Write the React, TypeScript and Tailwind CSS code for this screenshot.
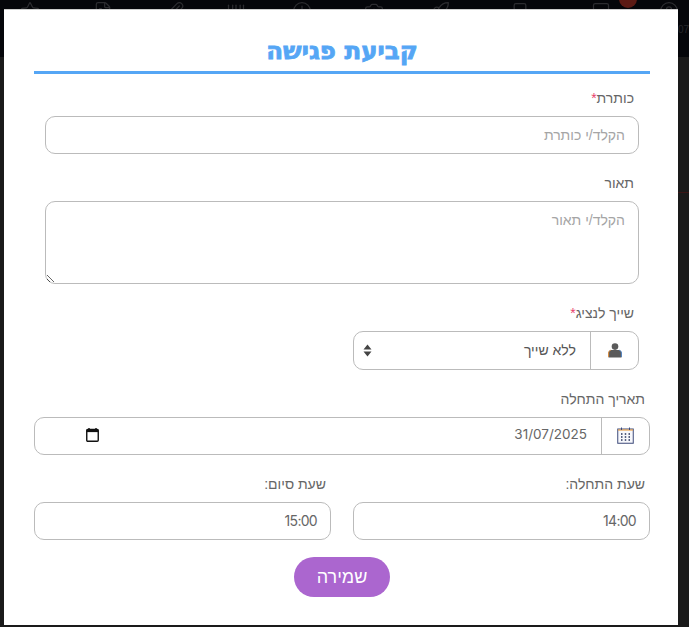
import React from "react";
import { Star, FileText, Paperclip, Barcode, Clock, Camera, Rocket, Bookmark, SquareCheck, CircleUser } from "lucide-react";

const labelCls = "block text-[14px] leading-[20px] text-[#666666] font-['Liberation_Sans',sans-serif]";
const fieldCls = "bg-white border border-[#bbbbbb] rounded-[10px] text-[14px] text-[#555555] outline-none";
const numCls = "font-['Inter',sans-serif] text-[13.5px] text-[#666666]";

function Req() {
  return <span className="text-[#e83e6c]">*</span>;
}

const bgIcons = [
  { I: Star, cls: "ml-[20px]" },
  { I: FileText, cls: "ml-[53px]" },
  { I: Paperclip, cls: "ml-[53px]" },
  { I: Barcode, cls: "ml-[40px]" },
  { I: Clock, cls: "ml-[46px]" },
  { I: Camera, cls: "ml-[52px]" },
  { I: Rocket, cls: "ml-[46px]" },
  { I: Bookmark, cls: "ml-[60px]" },
  { I: SquareCheck, cls: "ml-[61px]" },
  { I: CircleUser, cls: "ml-[48px]" },
];

export default function App() {
  return (
    <div dir="rtl" className="relative w-[689px] h-[627px] overflow-hidden bg-[#1a1a1a] font-['Liberation_Sans',sans-serif]">
      <div dir="ltr" className="absolute left-0 top-0 w-full h-[57px] bg-[#05060a]">
        <div className="flex pt-[1px]">
          {bgIcons.map(({ I, cls }, i) => (
            <I key={i} size={20} strokeWidth={1.5} className={`${cls} shrink-0 text-[#2c2c30]`} />
          ))}
        </div>
        <div className="absolute left-[619px] -top-[10px] w-[18px] h-[18px] rounded-full bg-[#5c1a14]" />
        <span className="absolute left-[678px] top-[24px] text-[10px] leading-[12px] text-[#26262a]">07</span>
      </div>
      <div className="absolute left-[678px] top-[192px] w-[11px] h-px bg-[#3a1515]" />

      <div className="absolute left-[4px] top-[9px] w-[674px] h-[616px] bg-white border-t border-[#cccccc] pl-[30px] pr-[28px]">
        <h1 className="h-[64px] pt-[23px] border-b-[3px] border-[#55a6f5] text-center text-[24.5px] leading-[36px] font-bold text-[#55a6f5] [-webkit-text-stroke:0.8px_#55a6f5] font-['DejaVu_Sans',sans-serif]">
          קביעת פגישה
        </h1>

        <div className="px-[11px]">
          <label className={`${labelCls} mt-[14px] pr-[5px]`}>כותרת<Req /></label>
          <input
            placeholder="הקלד/י כותרת"
            className={`${fieldCls} mt-[8px] block w-[594px] h-[38px] px-[13px] placeholder:text-[#a5a5a5]`}
          />
          <label className={`${labelCls} mt-[19px] pr-[5px]`}>תאור</label>
          <textarea
            placeholder="הקלד/י תאור"
            className={`${fieldCls} mt-[8px] block w-[594px] h-[83px] px-[13px] py-[8px] placeholder:text-[#a5a5a5]`}
          />
          <label className={`${labelCls} mt-[19px] pr-[5px]`}>שייך לנציג<Req /></label>
          <div className={`${fieldCls} mt-[8px] flex items-center w-[286px] h-[39px]`}>
            <div className="w-[48px] h-full shrink-0 border-l border-[#bbbbbb] flex items-center justify-center">
              <svg width="14" height="15" viewBox="0 0 14 15">
                <circle cx="7" cy="3.6" r="3.3" fill="#5a5a5a" />
                <path d="M0.5 14.5 V10 C0.5 8 2 7 3.5 7 H10.5 C12 7 13.5 8 13.5 10 V14.5 Z" fill="#5a5a5a" />
                <path d="M0.6 14 V10 C0.6 8.5 1.5 7.6 2.8 7.2" stroke="#d98a3a" strokeWidth="1" fill="none" />
                <path d="M13.4 14 V10 C13.4 8.5 12.5 7.6 11.2 7.2" stroke="#4a7fc0" strokeWidth="1" fill="none" />
              </svg>
            </div>
            <span className="flex-1 pr-[14px] text-[#555555]">ללא שייך</span>
            <svg width="9" height="13" viewBox="0 0 9 13" className="ml-[9px]">
              <path d="M4.5 0.5 L8.5 5.5 H0.5 Z M0.5 7.5 H8.5 L4.5 12.5 Z" fill="#444444" />
            </svg>
          </div>
        </div>

        <label className={`${labelCls} mt-[19px] pr-[5px]`}>תאריך התחלה</label>
        <div className={`${fieldCls} mt-[8px] flex items-center w-[616px] h-[38px]`}>
          <div className="w-[48px] h-full shrink-0 border-l border-[#bbbbbb] flex items-center justify-center">
            <svg width="17" height="17" viewBox="0 0 17 17" className="-mt-[2px]">
              <rect x="0.75" y="2" width="15.5" height="14.25" fill="#f7f8fc" stroke="#3c4a7a" strokeWidth="1" />
              <path d="M1 2 H16 V4 H1 Z" fill="#e9a14a" opacity="0.6" />
              <path d="M4.5 0.5 V3 M12.5 0.5 V3" stroke="#3c4a7a" strokeWidth="1" />
              <path d="M4 7 H5.5 M7.75 7 H9.25 M11.5 7 H13 M4 10 H5.5 M7.75 10 H9.25 M11.5 10 H13 M4 13 H5.5 M7.75 13 H9.25 M11.5 13 H13" stroke="#26305a" strokeWidth="1.6" />
            </svg>
          </div>
          <span className={`flex-1 pr-[14px] -mt-[3px] ${numCls}`}>31/07/2025</span>
          <svg width="13" height="14" viewBox="0 0 13 14" className="ml-[51px] -mt-[2px]">
            <path d="M3 0 V2 M10 0 V2" stroke="#111111" strokeWidth="1.4" />
            <rect x="0.75" y="1.5" width="11.5" height="11.75" rx="1" fill="#ffffff" stroke="#111111" strokeWidth="1.4" />
            <rect x="0.75" y="1.5" width="11.5" height="2.6" fill="#111111" />
          </svg>
        </div>

        <div className="flex gap-[22px] mt-[19px]">
          <div className="flex-1">
            <label className={`${labelCls} pr-[5px]`}>שעת התחלה:</label>
            <div className={`${fieldCls} mt-[8px] h-[38px] flex items-center pr-[13px] pb-[2px] tracking-[-0.7px] ${numCls}`}>14:00</div>
          </div>
          <div className="flex-1">
            <label className={`${labelCls} pr-[5px]`}>שעת סיום:</label>
            <div className={`${fieldCls} mt-[8px] h-[38px] flex items-center pr-[13px] pb-[2px] tracking-[-0.7px] ${numCls}`}>15:00</div>
          </div>
        </div>

        <div className="flex justify-center mt-[17px]">
          <button className="w-[96px] h-[40px] rounded-[20px] bg-[#ab66cf] text-white text-[18px]">שמירה</button>
        </div>
      </div>
    </div>
  );
}
